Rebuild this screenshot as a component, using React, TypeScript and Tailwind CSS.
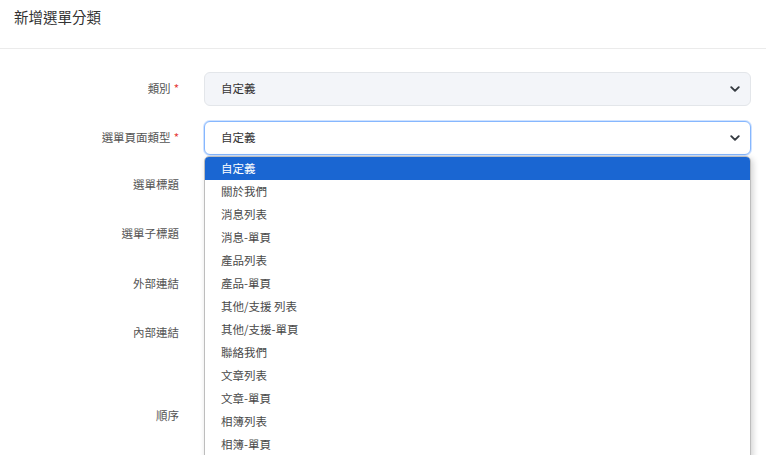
import { ReactNode } from "react";

const font = { fontFamily: '"Noto Sans CJK TC", "Noto Sans", sans-serif' };

const options = [
    "自定義",
    "關於我們",
    "消息列表",
    "消息-單頁",
    "產品列表",
    "產品-單頁",
    "其他/支援 列表",
    "其他/支援-單頁",
    "聯絡我們",
    "文章列表",
    "文章-單頁",
    "相簿列表",
    "相簿-單頁",
];

function Chevron() {
    return (
        <svg width="10" height="10" viewBox="0 0 16 16" className="text-[#343a40]">
            <path d="M2 5l6 6 6-6" fill="none" stroke="currentColor" strokeWidth="3" strokeLinecap="round" strokeLinejoin="round" />
        </svg>
    );
}

interface RowProps {
    label: string;
    required?: boolean;
    height: number;
    children?: ReactNode;
}

function Row(props: RowProps) {
    const { label, required, children } = props;
    return (
        <div className="flex items-center" style={{ height: props.height }}>
            <label className="w-[182px] shrink-0 text-right pr-[3px] text-[11.5px] text-[#555]">
                {label}
                {required && <span className="text-[#e53935] ml-[3px]">*</span>}
            </label>
            <div className="ml-[22px] w-[547px]">{children}</div>
        </div>
    );
}

function FakeSelect({ value, focused }: { value: string; focused?: boolean }) {
    return (
        <div
            className={`h-[34px] rounded-[6px] border flex items-center justify-between pl-[16px] pr-[10px] text-[11.5px] text-[#333] ${
                focused ? "bg-white border-[#86b7fe] shadow-[0_0_0_1px_#cfe2ff]" : "bg-[#f3f5f9] border-[#e3e6ea]"
            }`}
        >
            <span>{value}</span>
            <Chevron />
        </div>
    );
}

export default function App() {
    return (
        <div className="w-[766px] h-[455px] overflow-hidden bg-white relative" style={font}>
            <div className="h-[49px] border-b border-[#ebebeb] pl-[14px] pt-[6px]">
                <h1 className="text-[14.5px] text-[#333]">新增選單分類</h1>
            </div>

            <div className="pt-[23px] flex flex-col gap-[15px]">
                <Row label="類別" required height={34}>
                    <FakeSelect value="自定義" />
                </Row>
                <Row label="選單頁面類型" required height={34}>
                    <FakeSelect value="自定義" focused />
                </Row>
                <Row label="選單標題" height={30} />
                <Row label="選單子標題" height={38} />
                <Row label="外部連結" height={32} />
                <Row label="內部連結" height={36} />
                <div className="h-[19px]" />
                <Row label="順序" height={32} />
            </div>

            <ul className="absolute left-[204px] top-[156px] w-[547px] bg-white border border-[#bdbdbd] rounded-[5px] shadow-[2px_2px_6px_rgba(0,0,0,0.18)] overflow-hidden text-[11.5px] text-[#4a4a4a] pb-[4px]">
                {options.map((o, i) => (
                    <li
                        key={o}
                        className={`h-[23px] flex items-center pl-[16px] ${i == 0 ? "bg-[#1a66d2] text-white" : ""}`}
                    >
                        {o}
                    </li>
                ))}
            </ul>
        </div>
    );
}
